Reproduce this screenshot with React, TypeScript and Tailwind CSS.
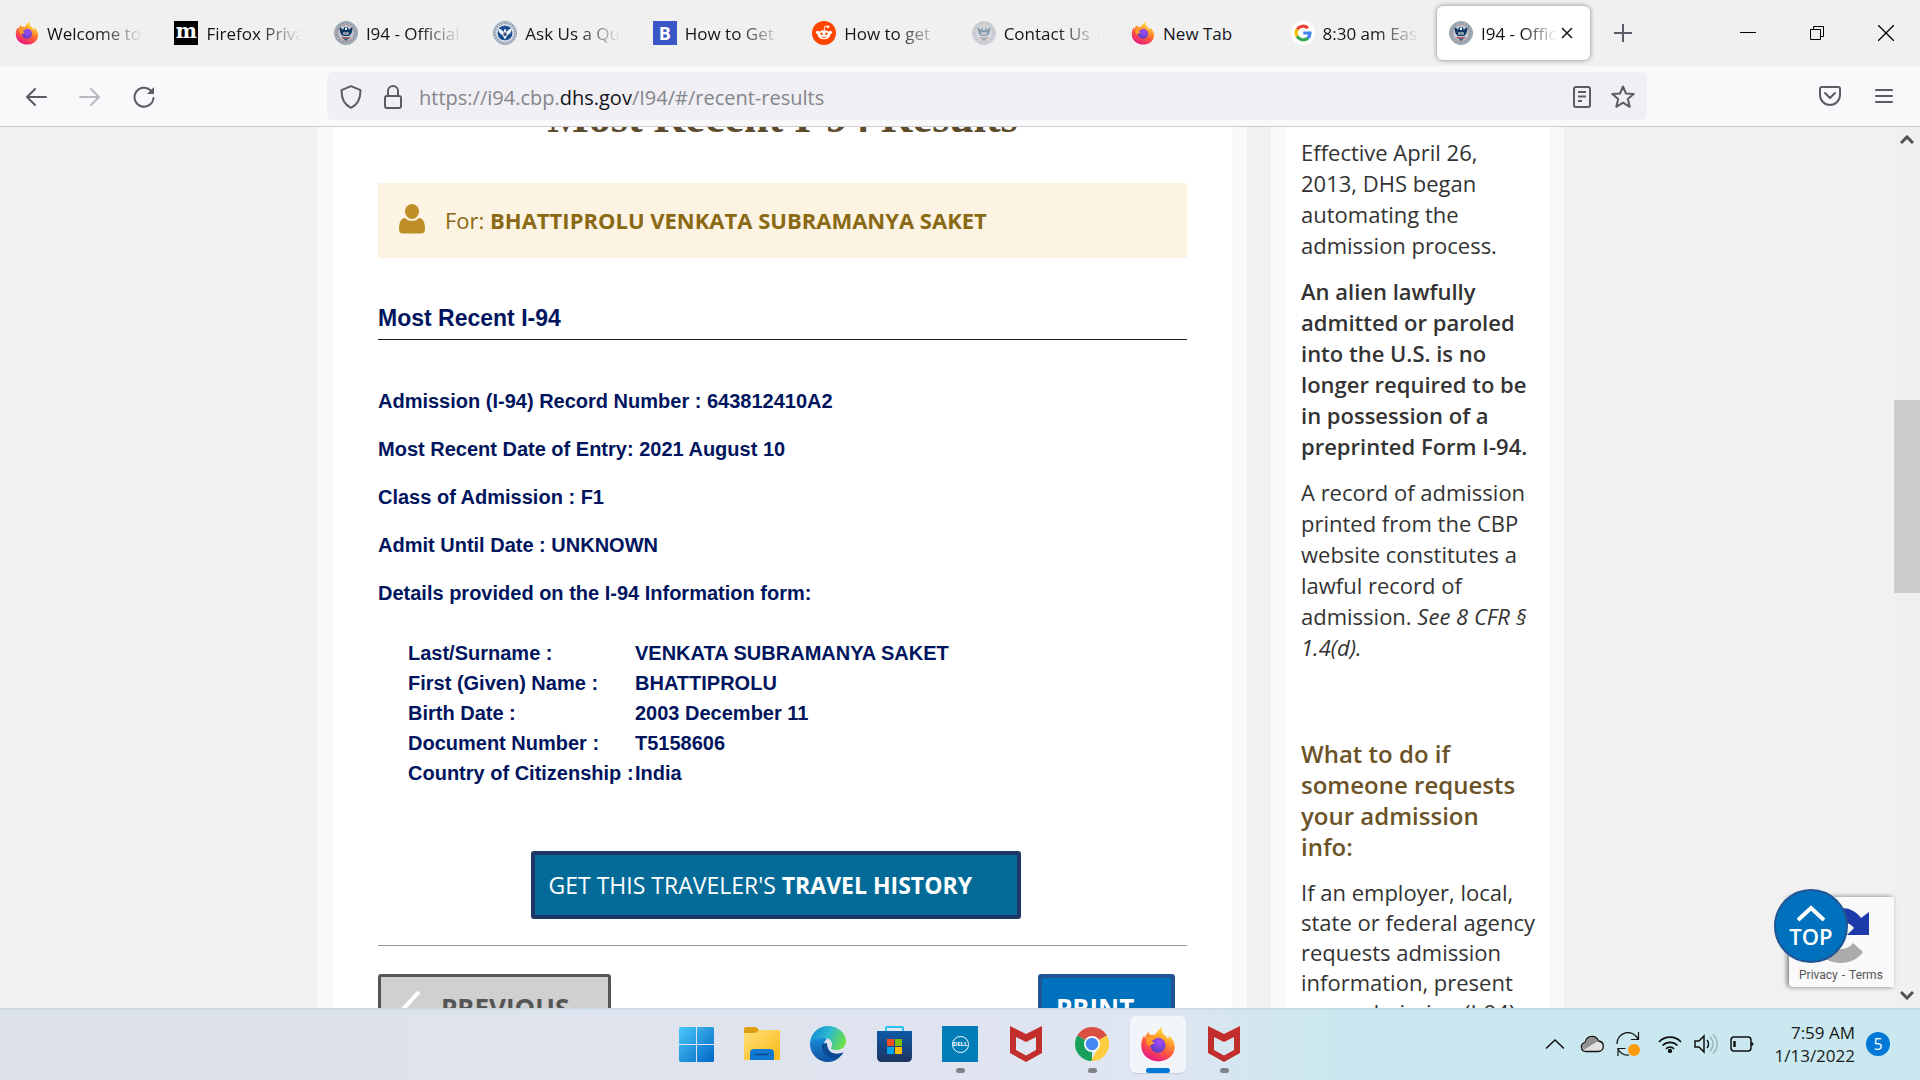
import type { ReactNode } from "react";

const sans = "font-['Open_Sans','Noto_Sans',sans-serif]";
const fade = "[mask-image:linear-gradient(to_right,black_55%,transparent_100%)]";

function FirefoxIcon({ className }: { className: string }) {
  return (
    <svg viewBox="0 0 24 24" className={className} aria-hidden="true">
      <defs>
        <linearGradient id="ffBody" x1="0.8" y1="0" x2="0.3" y2="1">
          <stop offset="0" stopColor="#fff44f" />
          <stop offset="0.3" stopColor="#ffb02e" />
          <stop offset="0.6" stopColor="#ff5a3c" />
          <stop offset="1" stopColor="#e31587" />
        </linearGradient>
        <radialGradient id="ffGlobe" cx="0.6" cy="0.3" r="0.7">
          <stop offset="0" stopColor="#a44bf5" />
          <stop offset="1" stopColor="#5b3fc4" />
        </radialGradient>
      </defs>
      <path
        fill="url(#ffBody)"
        d="M15.2 0.6c-1.2 2-0.4 4 1.2 5.4 1.2 1 2 1.9 2.3 3 .5-.9.5-1.9.3-2.6 2.6 1.9 4.2 4.7 4.2 7.6 0 5.6-4.9 9.6-11 9.6S.8 19.200.8 13.200c0-2.600.6-4.800 2-7 .1 1 .3 1.400.7 1.900.2-1.700 1.100-3.200 2.400-4.200 0 .8.2 1.500.7 2 1-.1 2.100-.1 3 .1 1.300-1 1.900-3.600 5.600-5.400z"
      />
      <circle cx="12" cy="12.800" r="5" fill="url(#ffGlobe)" />
      <path fill="#ff9a2b" d="M4.500 7.500c2-1.300 5.200-1.200 6.800.2-.3 1-1.600 1.200-2.800 1.600-1 .4-.3 1.600 1.300 1.700-1 1.600-3 1.200-4 2.700-1.600-1.700-2-4-1.300-6.200z" />
    </svg>
  );
}

function CbpSeal({ className, faded }: { className: string; faded?: boolean }) {
  return (
    <svg viewBox="0 0 24 24" className={className} opacity={faded ? 0.45 : 1} aria-hidden="true">
      <circle cx="12" cy="12" r="11.500" fill="#b4bac0" stroke="#959ca4" />
      <circle cx="12" cy="12" r="9.800" fill="none" stroke="#6d8fb0" strokeWidth="1.300" strokeDasharray="1.600 1.200" />
      <circle cx="12" cy="12" r="8.300" fill="#b9cbda" stroke="#b98a86" strokeWidth="1" />
      <path fill="#12365f" d="M5.500 6.500c1.500 0 2.500 1 3.500 2.500L10.500 6h3L15 9c1-1.500 2-2.500 3.500-2.500-.2 4-1 7-3.500 8.500H9c-2.500-1.500-3.300-4.500-3.500-8.500z" />
      <path fill="#f2f5f7" d="M11 6.500h2v2.500h-2zM9.500 11h1v3h-1zM11.500 11h1v3h-1zM13.500 11h1v3h-1z" />
      <path fill="#c0605c" d="M7 16h10l-2 2H9z" />
      <path fill="#2c5d86" d="M9 17.500h6L12 20z" />
    </svg>
  );
}

function DhsSeal({ className }: { className: string }) {
  return (
    <svg viewBox="0 0 24 24" className={className} aria-hidden="true">
      <circle cx="12" cy="12" r="11.500" fill="#c9ced6" stroke="#8f9db0" />
      <circle cx="12" cy="12" r="9.800" fill="none" stroke="#7b8fae" strokeWidth="1.300" strokeDasharray="1.400 1.400" />
      <circle cx="12" cy="12" r="8" fill="#1b4f8f" stroke="#e9eef4" strokeWidth="1" />
      <path fill="#f4f7fa" d="M5 7.500c2.500.3 4 1.500 5.500 3.500l1-3h1l1 3c1.500-2 3-3.200 5.500-3.500-.5 3.500-2 5.500-4.500 6.500l-2.500 4.500L9.500 14C7 13 5.500 11 5 7.500z" />
      <path fill="#1b4f8f" d="M10.500 11.500h3V14L12 15.500 10.500 14z" />
      <path stroke="#c0504d" strokeWidth="0.800" d="M10.500 13h3" />
    </svg>
  );
}

function GoogleIcon() {
  return (
    <svg viewBox="0 0 24 24" className="size-6" aria-hidden="true">
      <circle cx="12" cy="12" r="12" fill="#fff" />
      <g fill="none" strokeWidth="3.200">
        <path stroke="#ea4335" d="M6.200 8.500A7 7 0 0 1 17 7.200" />
        <path stroke="#fbbc05" d="M6.200 15.500a7 7 0 0 1 0-7.200" />
        <path stroke="#34a853" d="M17 17a7 7 0 0 1-10.800-1.700" />
        <path stroke="#4285f4" d="M12.300 12H19c0 2.200-.8 3.900-2.200 5.200" />
      </g>
    </svg>
  );
}

function RedditIcon() {
  return (
    <svg viewBox="0 0 24 24" className="size-6" aria-hidden="true">
      <circle cx="12" cy="12" r="12" fill="#ff4500" />
      <g fill="#fff">
        <ellipse cx="12" cy="13.800" rx="6.300" ry="4.500" />
        <circle cx="5.700" cy="11.500" r="1.800" />
        <circle cx="18.300" cy="11.500" r="1.800" />
        <circle cx="16" cy="5.800" r="1.400" />
      </g>
      <path d="M12 9.500l1-4.500 3 .7" fill="none" stroke="#fff" strokeWidth="0.900" />
      <circle cx="9.500" cy="12.800" r="1.200" fill="#ff4500" />
      <circle cx="14.500" cy="12.800" r="1.200" fill="#ff4500" />
      <path d="M9.300 15.700c1.500 1.200 3.900 1.200 5.400 0" fill="none" stroke="#ff4500" strokeWidth="0.900" />
    </svg>
  );
}

const tabs: { title: string; short?: boolean; icon: ReactNode }[] = [
  { title: "Welcome to", icon: <FirefoxIcon className="size-6" /> },
  {
    title: "Firefox Priva",
    icon: <span className="flex size-6 items-center justify-center bg-black pb-1 font-['DejaVu_Serif',serif] text-xl leading-none font-bold text-white">m</span>,
  },
  { title: "I94 - Official |", icon: <CbpSeal className="size-6" /> },
  { title: "Ask Us a Qu", icon: <DhsSeal className="size-6" /> },
  {
    title: "How to Get",
    icon: <span className="flex size-6 items-center justify-center bg-[#3a55c4] text-lg leading-none font-bold text-white">B</span>,
  },
  { title: "How to get |", icon: <RedditIcon /> },
  { title: "Contact Us |", icon: <CbpSeal className="size-6" faded /> },
  { title: "New Tab", short: true, icon: <FirefoxIcon className="size-6" /> },
  { title: "8:30 am East", icon: <GoogleIcon /> },
];

function TabBar() {
  return (
    <header className="flex h-[66px] shrink-0 items-center bg-[#f0f0f0] text-[17px] text-[#15141a]">
      <div role="tablist" className="flex items-center">
        <div className="flex w-[1435px] items-center">
          {tabs.map((t) => (
            <button key={t.title} role="tab" aria-selected="false" className="flex min-w-0 flex-1 items-center gap-2 pl-[15px] text-left">
              <span className="shrink-0">{t.icon}</span>
              <span className={t.short ? "pt-[2px] whitespace-nowrap" : `w-24 overflow-hidden pt-[2px] whitespace-nowrap ${fade}`}>{t.title}</span>
            </button>
          ))}
        </div>
        <div role="tab" aria-selected="true" className="ml-[2px] flex h-[54px] w-[153px] items-center gap-2 rounded-md bg-white pl-3 shadow-[0_0_5px_rgba(0,0,0,0.45)]">
          <CbpSeal className="size-6 shrink-0" />
          <span className={`w-[76px] overflow-hidden pt-[2px] whitespace-nowrap ${fade}`}>I94 - Offic</span>
          <button aria-label="Close tab" className="-ml-1">
            <svg viewBox="0 0 12 12" className="size-3" stroke="#15141a" strokeWidth="1.500"><path d="M1 1l10 10M11 1L1 11" /></svg>
          </button>
        </div>
      </div>
      <button aria-label="New tab" className="ml-6">
        <svg viewBox="0 0 18 18" className="size-[18px]" stroke="#5b5b66" strokeWidth="2"><path d="M9 0v18M0 9h18" /></svg>
      </button>
      <div className="ml-auto flex items-center gap-[53px] pr-[26px]">
        <button aria-label="Minimize"><svg viewBox="0 0 16 16" className="size-4" stroke="#000" fill="none"><path d="M0 7.500h16" /></svg></button>
        <button aria-label="Restore"><svg viewBox="0 0 16 16" className="size-4" stroke="#000" fill="none"><path d="M1.500 4.500h10v10h-10zM4.500 4V1.500h10v10H12" /></svg></button>
        <button aria-label="Close"><svg viewBox="0 0 16 16" className="size-4" stroke="#000" strokeWidth="1.300" fill="none"><path d="M0 0l16 16M16 0L0 16" /></svg></button>
      </div>
    </header>
  );
}

function NavBar() {
  return (
    <nav className="flex h-[61px] shrink-0 items-center border-b border-[#cccccf] bg-[#f9f9fb] pr-[27px] text-[#5b5b66]">
      <div className="flex w-[327px] shrink-0 items-center gap-8 pt-[2px] pl-[25px]">
        <button aria-label="Back"><svg viewBox="0 0 22 20" className="h-5 w-[22px]" fill="none" stroke="currentColor" strokeWidth="2" strokeLinecap="round" strokeLinejoin="round"><path d="M21 10H2M10 2L2 10l8 8" /></svg></button>
        <button aria-label="Forward" className="opacity-40"><svg viewBox="0 0 22 20" className="h-5 w-[22px]" fill="none" stroke="currentColor" strokeWidth="2" strokeLinecap="round" strokeLinejoin="round"><path d="M1 10h19M12 2l8 8-8 8" /></svg></button>
        <button aria-label="Reload"><svg viewBox="0 0 22 22" className="size-[22px]" fill="none" stroke="currentColor" strokeWidth="2" strokeLinecap="round"><path d="M20.500 12A9.500 9.500 0 1 1 17.800 4.500" /><path d="M21 1v7h-7z" fill="currentColor" stroke="none" /></svg></button>
      </div>
      <div className="flex h-12 flex-1 items-center rounded-md bg-[#f0f0f4] pt-px pr-3 pl-[13px]">
        <button aria-label="Tracking protection"><svg viewBox="0 0 22 24" className="h-6 w-[22px]" fill="none" stroke="currentColor" strokeWidth="2" strokeLinejoin="round"><path d="M11 1.200l9.500 4c0 8-2.500 14.300-9.500 17.600C4 19.500 1.500 13.200 1.500 5.200z" /></svg></button>
        <button aria-label="Site information" className="ml-[22px]"><svg viewBox="0 0 18 24" className="h-6 w-[18px]" fill="none" stroke="currentColor" strokeWidth="2"><rect x="1" y="11" width="16" height="12" rx="2" /><path d="M4 11V6a5 5 0 0 1 10 0v5" /></svg></button>
        <a href="#/recent-results" className="ml-[17px] flex-1 pt-[2px] text-xl text-[#85858c]">
          https://i94.cbp.<span className="text-[#15141a]">dhs.gov</span>/I94/#/recent-results
        </a>
        <button aria-label="Reader view"><svg viewBox="0 0 18 22" className="h-[22px] w-[18px]" fill="none" stroke="currentColor" strokeWidth="2"><rect x="1" y="1" width="16" height="20" rx="2" /><path d="M5 6h8M5 10.500h8M5 15h4" /></svg></button>
        <button aria-label="Bookmark" className="ml-5"><svg viewBox="0 0 24 24" className="size-6" fill="none" stroke="currentColor" strokeWidth="2" strokeLinejoin="round"><path d="M12 1.500l3 7 7.700.6-5.900 5 1.900 7.700L12 17.700l-6.700 4.100 1.900-7.700-5.900-5L9 8.500z" /></svg></button>
      </div>
      <button aria-label="Save to Pocket" className="ml-[172px]"><svg viewBox="0 0 22 20" className="h-5 w-[22px]" fill="none" stroke="currentColor" strokeWidth="2" strokeLinecap="round" strokeLinejoin="round"><path d="M3 1h16a2 2 0 0 1 2 2v6a10 10 0 0 1-20 0V3a2 2 0 0 1 2-2zM6 7l5 5 5-5" /></svg></button>
      <button aria-label="Menu" className="ml-[34px]"><svg viewBox="0 0 18 16" className="h-4 w-[18px]" stroke="currentColor" strokeWidth="2" strokeLinecap="round"><path d="M1 2h16M1 8h16M1 14h16" /></svg></button>
    </nav>
  );
}

const records = [
  "Admission (I-94) Record Number : 643812410A2",
  "Most Recent Date of Entry: 2021 August 10",
  "Class of Admission : F1",
  "Admit Until Date : UNKNOWN",
  "Details provided on the I-94 Information form:",
];

const details = [
  ["Last/Surname :", "VENKATA SUBRAMANYA SAKET"],
  ["First (Given) Name :", "BHATTIPROLU"],
  ["Birth Date :", "2003 December 11"],
  ["Document Number :", "T5158606"],
  ["Country of Citizenship :", "India"],
];

function Results() {
  return (
    <main className="flex-1 border-x-[15px] border-[#f9f9f9] bg-white px-[45px]">
      <h1 className="-mt-8 h-[88px] text-center font-['Liberation_Serif',serif] text-[44px] leading-[46px] font-bold whitespace-nowrap text-[#5e4b2b]">
        Most Recent I-94 Results
      </h1>
      <div className="flex h-[75px] items-center bg-[#fdf3e2] pl-[21px] text-[22px] text-[#8a6914]">
        <svg viewBox="0 0 26 30" className="mb-1 h-[30px] w-[26px]" fill="#bd8f26" aria-hidden="true">
          <ellipse cx="13" cy="7.500" rx="7" ry="7.500" />
          <path d="M6 14c2 2 4 2.800 7 2.800s5-.8 7-2.800c4 0 6 4.500 6 11 0 3-1.500 4.500-4 4.500H4c-2.500 0-4-1.500-4-4.500 0-6.500 2-11 6-11z" />
        </svg>
        <p className="ml-5">For: <strong>BHATTIPROLU VENKATA SUBRAMANYA SAKET</strong></p>
      </div>
      <div className="font-['Liberation_Sans',Arial,sans-serif] font-bold text-[#00155e]">
        <h2 className="mt-11 border-b border-[#212121] pb-[5px] text-[23px] leading-8">Most Recent I-94</h2>
        <div className="mt-[37px] text-xl leading-[48px]">
          {records.map((r) => <p key={r}>{r}</p>)}
        </div>
        <table className="mt-[21px] ml-[30px] text-left text-xl leading-[30px]">
          <tbody>
            {details.map(([k, v]) => (
              <tr key={k}>
                <th scope="row" className="w-[227px] p-0 whitespace-nowrap">{k}</th>
                <td className="p-0">{v}</td>
              </tr>
            ))}
          </tbody>
        </table>
      </div>
      <div className="mt-[63px] flex justify-center pr-[14px]">
        <button className="h-[68px] w-[490px] rounded-[3px] border-4 border-[#1c3666] bg-[#046b99] pl-[14px] text-left text-[23px] whitespace-nowrap text-white">
          GET THIS TRAVELER'S <strong>TRAVEL HISTORY</strong>
        </button>
      </div>
      <hr className="mt-[26px] border-[#999]" />
      <div className="mt-7 flex justify-between pr-3 text-[26px] font-bold">
        <button className="flex h-[68px] w-[233px] items-center rounded-[3px] border-[3px] border-[#555] bg-[#d0d0d0] pl-5 text-[#555]">
          <svg viewBox="0 0 20 34" className="mr-5 h-[34px] w-5" fill="none" stroke="#fff" strokeWidth="4"><path d="M18 1L3 17l15 16" /></svg>
          PREVIOUS
        </button>
        <button className="h-[68px] w-[137px] rounded-[3px] border-4 border-[#205493] bg-[#0071bc] pl-[14px] text-left text-white">PRINT</button>
      </div>
    </main>
  );
}

function Sidebar() {
  return (
    <aside className="w-[293px] shrink-0 border-x-[15px] border-[#f9f9f9] bg-white pl-[15px] text-[22px] leading-[31px] whitespace-nowrap text-[#333]">
      <p className="mt-[10px]">Effective April 26,<br />2013, DHS began<br />automating the<br />admission process.</p>
      <p className="mt-[15px] font-semibold">An alien lawfully<br />admitted or paroled<br />into the U.S. is no<br />longer required to be<br />in possession of a<br />preprinted Form I-94.</p>
      <p className="mt-[15px]">A record of admission<br />printed from the CBP<br />website constitutes a<br />lawful record of<br />admission. <em>See 8 CFR §<br />1.4(d).</em></p>
      <h3 className="mt-[75px] text-2xl leading-[31px] font-semibold text-[#6b5227]">What to do if<br />someone requests<br />your admission<br />info:</h3>
      <p className="mt-[15px] leading-[30px]">If an employer, local,<br />state or federal agency<br />requests admission<br />information, present<br />your admission (I-94)</p>
    </aside>
  );
}

function Page() {
  return (
    <div className="relative flex min-h-0 flex-1 overflow-hidden bg-[#f1f1f1]">
      <div className="flex flex-1 items-start gap-6 pr-[330px] pl-[318px]">
        <Results />
        <Sidebar />
      </div>
      <div className="flex w-[26px] flex-col items-center bg-[#f0f0f0] py-2">
        <svg viewBox="0 0 14 10" className="h-[10px] w-[14px]" fill="none" stroke="#505050" strokeWidth="3"><path d="M1 8l6-6 6 6" /></svg>
        <div className="mt-[255px] h-[193px] w-full bg-[#cdcdcd]" />
        <svg viewBox="0 0 14 10" className="mt-auto h-[10px] w-[14px]" fill="none" stroke="#505050" strokeWidth="3"><path d="M1 2l6 6 6-6" /></svg>
      </div>
      <div className="absolute right-[26px] bottom-[21px] h-[90px] w-[105px] overflow-visible rounded-l-sm bg-[#f9f9f9] pt-[10px] shadow-[-2px_0_5px_rgba(0,0,0,0.5)]">
        <svg viewBox="0 0 56 56" className="ml-6 size-14" aria-hidden="true">
          <path fill="#1c3aa9" d="M56 5v23H34l7-7c-3-4-8-6-13-6V1c8 0 15 3 20 10z" />
          <path fill="#4285f4" d="M28 1v14c-7 0-13 5-13 13H1C1 13 12 1 28 1z" />
          <path fill="#ababab" d="M50 45C45 52 37 56 28 56 14 56 3 47 1 34h15c3 6 7 8 12 8 5 0 9-2 12-6z" />
        </svg>
        <p className="flex gap-1 pl-[10px] font-[Roboto,sans-serif] text-xs leading-6 whitespace-nowrap text-[#555]"><a href="#privacy">Privacy</a><span>-</span><a href="#terms">Terms</a></p>
      </div>
      <a href="#top" className="absolute right-[72px] bottom-[45px] flex size-[74px] flex-col items-center rounded-full border-2 border-[#205493] bg-[#0071bc] pt-[14px] text-[22px] leading-7 font-semibold text-white">
        <svg viewBox="0 0 28 17" className="h-[17px] w-7" fill="none" stroke="#fff" strokeWidth="4"><path d="M1 15L14 3l13 12" /></svg>
        TOP
      </a>
    </div>
  );
}

function McAfeeIcon() {
  return (
    <svg viewBox="0 0 32 36" className="h-9 w-8" aria-hidden="true">
      <path fill="#c22e2b" fillRule="evenodd" d="M0 0l16 8L32 0v27l-16 9-16-9zM6 11v13l10 5.500L26 24V11l-10 5z" />
    </svg>
  );
}

const apps: { name: string; running?: boolean; active?: boolean; icon: ReactNode }[] = [
  {
    name: "Start",
    icon: (
      <svg viewBox="0 0 35 35" className="size-[35px]">
        <defs><linearGradient id="win" gradientUnits="userSpaceOnUse" x1="0" y1="0" x2="35" y2="35"><stop offset="0" stopColor="#4cc8f8" /><stop offset="1" stopColor="#0067c6" /></linearGradient></defs>
        <path fill="url(#win)" d="M1 0h16v17H0V1zM18 0h16l1 1v16H18zM0 18h17v17H1l-1-1zM18 18h17v16l-1 1H18z" />
      </svg>
    ),
  },
  {
    name: "File Explorer",
    icon: (
      <svg viewBox="0 0 36 34" className="h-[34px] w-9">
        <defs><linearGradient id="folder" x1="0" y1="0" x2="1" y2="1"><stop offset="0" stopColor="#ffe07a" /><stop offset="1" stopColor="#fbb914" /></linearGradient></defs>
        <path fill="#dfa010" d="M0 2q0-2 2-2h10l4 4v6H0z" />
        <path fill="url(#folder)" d="M0 6h12l3-3h21v29q0 1-1 1H1q-1 0-1-1z" />
        <path fill="#0f78d0" d="M6 33v-7q0-4 4-4h16q4 0 4 4v7z" />
        <path stroke="#0a4a8a" strokeWidth="1.500" d="M11 27.500h14" />
      </svg>
    ),
  },
  {
    name: "Edge",
    icon: (
      <svg viewBox="0 0 36 36" className="size-9">
        <defs>
          <linearGradient id="edgeTop" x1="0" y1="0.200" x2="1" y2="0.500"><stop offset="0" stopColor="#1487d4" /><stop offset="0.500" stopColor="#2bb8d0" /><stop offset="1" stopColor="#6be04b" /></linearGradient>
          <linearGradient id="edgeLow" x1="0" y1="0" x2="0" y2="1"><stop offset="0" stopColor="#1b8fdc" /><stop offset="1" stopColor="#0c4f9e" /></linearGradient>
        </defs>
        <path fill="url(#edgeLow)" d="M0 18C2 10 12 9 17 13c-6 4-2 15 8 15 4 0 6-1 8-1.500C30 32 25 36 18 36 8 36 0 28 0 18z" />
        <path fill="url(#edgeTop)" d="M0 18C0 8 8 0 18 0s18 7 18 15c0 7-6 9-10 9-4 0-6-1-4.500-3 2-4-1-9-7-9C7 12 2 14 0 18z" />
        <path fill="#0c4a94" d="M12 18c-1 8 5 14 13 15 4-1 7-4 8.500-6.500C24 30 17 26 17 17z" />
      </svg>
    ),
  },
  {
    name: "Microsoft Store",
    icon: (
      <svg viewBox="0 0 35 36" className="h-9 w-[35px]">
        <defs><linearGradient id="store" x1="0" y1="0" x2="0" y2="1"><stop offset="0" stopColor="#0f5aa8" /><stop offset="1" stopColor="#1d3460" /></linearGradient></defs>
        <path fill="none" stroke="#2cc0f0" strokeWidth="2" d="M9 7V2q0-1 1-1h15q1 0 1 1v5" />
        <path fill="url(#store)" d="M0 5h35v26q0 5-5 5H5q-5 0-5-5z" />
        <path fill="#f25022" d="M10 13h7v7h-7z" /><path fill="#7fba00" d="M18 13h7v7h-7z" />
        <path fill="#00a4ef" d="M10 21h7v7h-7z" /><path fill="#ffb900" d="M18 21h7v7h-7z" />
      </svg>
    ),
  },
  {
    name: "Dell",
    running: true,
    icon: (
      <span className="flex size-9 items-center justify-center bg-[#007db8]">
        <span className="flex size-[17px] items-center justify-center rounded-full border border-white text-[6px] leading-none font-bold text-white">DELL</span>
      </span>
    ),
  },
  { name: "McAfee", icon: <McAfeeIcon /> },
  {
    name: "Chrome",
    running: true,
    icon: (
      <svg viewBox="0 0 34 34" className="size-[34px]">
        <path fill="#d94f41" d="M17 17L2.300 8.500a17 17 0 0 1 29.400 0z" />
        <path fill="#18a05c" d="M17 17v17A17 17 0 0 1 2.300 8.500z" />
        <path fill="#fdcd3f" d="M17 17l14.700-8.500A17 17 0 0 1 16 34l7.500-14z" />
        <path fill="#d94f41" d="M17 9h15l-4-5-14-2z" />
        <path fill="#18a05c" d="M2.300 8.500L10 21l7 4-3 8.700z" />
        <circle cx="17" cy="17" r="8" fill="#fff" /><circle cx="17" cy="17" r="6.300" fill="#4688f4" />
      </svg>
    ),
  },
  { name: "Firefox", active: true, icon: <FirefoxIcon className="size-9" /> },
  { name: "McAfee Security", running: true, icon: <McAfeeIcon /> },
];

function Taskbar() {
  return (
    <footer className="grid h-[72px] shrink-0 grid-cols-[1fr_auto_1fr] items-center border-t-2 border-[#c3d3de]/60 bg-linear-to-r from-[#dde1e9] from-0% via-[#dfe5f1] via-60% to-[#c9e8ef] to-70% pb-[2px] text-[#1a1a1a]">
      <div />
      <div className="flex gap-[10px]">
        {apps.map((a) => (
          <button key={a.name} aria-label={a.name} className={a.active ? "relative flex h-[57px] w-14 items-center justify-center rounded-md bg-white/60 shadow-[0_1px_1px_rgba(0,0,0,0.12)]" : "relative flex h-[57px] w-14 items-center justify-center"}>
            {a.icon}
            {a.running && <span className="absolute bottom-0 h-[5px] w-[9px] rounded-full bg-[#808488]" />}
            {a.active && <span className="absolute bottom-0 h-[5px] w-6 rounded-full bg-[#0078d7]" />}
          </button>
        ))}
      </div>
      <div className="flex items-center justify-end gap-3 pr-[30px]">
        <button aria-label="Show hidden icons"><svg viewBox="0 0 18 10" className="h-[10px] w-[18px]" fill="none" stroke="#111" strokeWidth="1.500"><path d="M0 9.500L9 1l9 8.500" /></svg></button>
        <svg viewBox="0 0 24 18" className="ml-1 h-[18px] w-6" aria-label="OneDrive"><path fill="#e2e2e2" stroke="#111" strokeWidth="1.300" d="M6 16.500a4.500 4.500 0 0 1-1-8.900C6 3.500 8.500 1.500 12 1.500c3.200 0 5.400 1.700 6.300 4.500 3 .3 5 2.500 5 5.300 0 3-2.200 5.200-5 5.200z" /><path fill="#929292" d="M5.300 8.300C6.200 4.200 8.600 2.200 12 2.200c2.800 0 4.800 1.500 5.700 4L4 14.800C1 12.500 2 9 5.300 8.300z" /></svg>
        <svg viewBox="0 0 24 24" className="size-6" aria-label="Update"><path fill="none" stroke="#111" strokeWidth="1.200" d="M1 12A11 11 0 0 1 22 7M22.500 0v7.500H15M2 24v-7.500h7.500M2 17c2 4 6 6.500 11 6" /><circle cx="18" cy="18" r="6" fill="#ff9a0a" /></svg>
        <div className="ml-[6px] flex items-center gap-3">
          <svg viewBox="0 0 24 18" className="h-[18px] w-6" fill="none" stroke="#111" strokeWidth="1.700" aria-label="Wi-Fi"><path d="M1 7a15 15 0 0 1 22 0M4.500 10.500a10.500 10.500 0 0 1 15 0M8 13.800a5.700 5.700 0 0 1 8 0" /><circle cx="12" cy="16" r="1.300" fill="#111" /></svg>
          <svg viewBox="0 0 24 20" className="h-5 w-6" fill="none" stroke="#111" strokeWidth="1.500" aria-label="Volume"><path d="M1 7h4l5-5v16l-5-5H1zM13 6c2 2 2 6 0 8" /><path stroke="#9fb5bc" d="M16 3c4 4 4 10 0 14M19 .5c5.500 5 5.500 14 0 19" /></svg>
          <svg viewBox="0 0 24 16" className="h-4 w-6" fill="none" stroke="#111" strokeWidth="1.500" aria-label="Battery"><rect x="1" y="1" width="20" height="14" rx="3" /><path fill="#111" d="M4.500 5v6M22 6.500v3" strokeWidth="2.500" /></svg>
        </div>
        <time className="ml-2 text-right text-[17px] leading-[23px] whitespace-nowrap">7:59 AM<br />1/13/2022</time>
        <span className="-ml-px flex size-6 items-center justify-center rounded-full bg-[#0078d7] text-base text-white">5</span>
      </div>
    </footer>
  );
}

export default function App() {
  return (
    <div className={`flex h-screen flex-col overflow-hidden ${sans}`}>
      <TabBar />
      <NavBar />
      <Page />
      <Taskbar />
    </div>
  );
}
